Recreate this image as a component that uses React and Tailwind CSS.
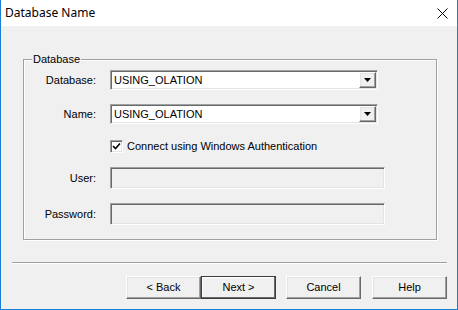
import React from 'react';

const sunken = "border border-t-[#a0a0a0] border-l-[#a0a0a0] border-r-white border-b-white shadow-[inset_1px_1px_0_#696969,inset_-1px_-1px_0_#e3e3e3]";
const raised = "border border-t-white border-l-white border-r-[#696969] border-b-[#696969] shadow-[inset_-1px_-1px_0_#a0a0a0,inset_1px_1px_0_#e3e3e3]";

const Label = ({ children }) => (
  <div className="w-[72px] text-right shrink-0 mr-[14px]">{children}</div>
);

const Combo = ({ value }) => (
  <div className={`w-[268px] h-[20px] p-[1px] bg-white flex items-stretch ${sunken}`}>
    <div className="flex-1 flex items-center pl-[2px] leading-none">{value}</div>
    <div className={`w-[17px] bg-[#f0f0f0] flex items-center justify-center ${raised}`}>
      <svg width="7" height="4" viewBox="0 0 7 4">
        <path d="M0 0h7L3.5 4z" fill="#000" />
      </svg>
    </div>
  </div>
);

const Field = () => (
  <div className={`w-[275px] h-[22px] bg-[#f0f0f0] ${sunken}`} />
);

const Button = ({ children, primary, className = "" }) => (
  <button
    className={`w-[75px] h-[23px] bg-[#f0f0f0] flex items-center justify-center leading-none ${
      primary
        ? "border border-[#3c3c3c] shadow-[inset_-1px_-1px_0_#696969,inset_1px_1px_0_#fff]"
        : raised
    } ${className}`}
  >
    {children}
  </button>
);

export default function App() {
  return (
    <div className="w-[458px] h-[310px] flex flex-col border-x border-b border-[#1a7fd4] bg-[#f0f0f0] text-[11px] text-black font-['Liberation_Sans',Arial,sans-serif]">
      {/* Title bar */}
      <div className="h-[26px] bg-white flex items-center justify-between pl-[4px] pr-[9px] shrink-0">
        <span className="text-[12px] font-['Noto_Sans',sans-serif] leading-none">Database Name</span>
        <svg width="11" height="11" viewBox="0 0 11 11">
          <path d="M0.5 0.5L10.5 10.5M10.5 0.5L0.5 10.5" stroke="#000" strokeWidth="1" />
        </svg>
      </div>

      {/* Group box */}
      <div className="ml-[22px] mt-[33px] w-[414px] h-[181px] border border-[#a0a0a0] shadow-[inset_1px_1px_0_#fff,1px_1px_0_#fff] flex flex-col">
        <div className="-mt-[7px] ml-[8px] px-[1px] w-fit bg-[#f0f0f0] leading-[13px]">Database</div>

        <div className="flex items-center mt-[4px]">
          <Label>Database:</Label>
          <Combo value="USING_OLATION" />
        </div>

        <div className="flex items-center mt-[14px]">
          <Label>Name:</Label>
          <Combo value="USING_OLATION" />
        </div>

        <div className="flex items-center mt-[16px]">
          <div className="w-[72px] mr-[14px]" />
          <div className={`w-[13px] h-[13px] bg-white flex items-center justify-center ${sunken}`}>
            <svg width="9" height="9" viewBox="0 0 9 9">
              <path d="M1 4l2.5 2.5L8 1.5" stroke="#000" strokeWidth="1.6" fill="none" />
            </svg>
          </div>
          <span className="ml-[4px] leading-[13px]">Connect using Windows Authentication</span>
        </div>

        <div className="flex items-center mt-[14px]">
          <Label>User:</Label>
          <Field />
        </div>

        <div className="flex items-center mt-[14px]">
          <Label>Password:</Label>
          <Field />
        </div>
      </div>

      {/* Separator */}
      <div className="ml-[11px] mt-[22px] w-[435px] border-t border-[#a0a0a0] border-b border-b-white" />

      {/* Buttons */}
      <div className="flex justify-end pr-[10px] mt-[12px]">
        <Button>&lt; Back</Button>
        <Button primary>Next &gt;</Button>
        <Button className="ml-[10px]">Cancel</Button>
        <Button className="ml-[11px]">Help</Button>
      </div>
    </div>
  );
}
